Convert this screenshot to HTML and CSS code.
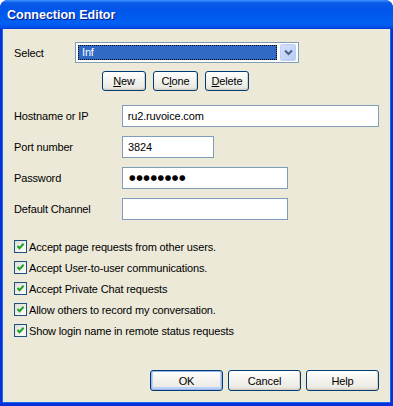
FILE: index.html
```html
<!DOCTYPE html>
<html lang="en">
<head>
  <meta charset="UTF-8">
  <title>Connection Editor</title>
  <link rel="stylesheet" href="styles.css">
</head>
<body>
  <div class="window">
    <div class="titlebar"><span class="title">Connection Editor</span></div>

    <div class="window-body">
      <!-- connection picker -->
      <div class="select-row">
        <span class="label select-label">Select</span>
        <div class="combo">
          <span class="combo-value">Inf</span>
          <span class="combo-button">
            <svg width="9" height="7" viewBox="0 0 9 7"><path d="M1 1.5 L4.5 5 L8 1.5" fill="none" stroke="#4d6185" stroke-width="2"/></svg>
          </span>
        </div>
      </div>

      <div class="tool-row">
        <button class="btn btn-small"><u>N</u>ew</button>
        <button class="btn btn-clone">C<u>l</u>one</button>
        <button class="btn btn-small"><u>D</u>elete</button>
      </div>

      <!-- server fields -->
      <div class="fields">
        <div class="field-row">
          <span class="label">Hostname or IP</span>
          <div class="field field-wide">ru2.ruvoice.com</div>
        </div>
        <div class="field-row">
          <span class="label">Port number</span>
          <div class="field field-short">3824</div>
        </div>
        <div class="field-row">
          <span class="label">Password</span>
          <div class="field field-mid password">●●●●●●●●</div>
        </div>
        <div class="field-row">
          <span class="label">Default Channel</span>
          <div class="field field-mid"></div>
        </div>
      </div>

      <!-- options -->
      <div class="checks">
        <label class="check"><span class="box"><svg width="11" height="11" viewBox="0 0 11 11"><path d="M2.5 5 L4.5 7.2 L8.6 2.8" fill="none" stroke="#21a121" stroke-width="2"/></svg></span>Accept page requests from other users.</label>
        <label class="check"><span class="box"><svg width="11" height="11" viewBox="0 0 11 11"><path d="M2.5 5 L4.5 7.2 L8.6 2.8" fill="none" stroke="#21a121" stroke-width="2"/></svg></span>Accept User-to-user communications.</label>
        <label class="check"><span class="box"><svg width="11" height="11" viewBox="0 0 11 11"><path d="M2.5 5 L4.5 7.2 L8.6 2.8" fill="none" stroke="#21a121" stroke-width="2"/></svg></span>Accept Private Chat requests</label>
        <label class="check"><span class="box"><svg width="11" height="11" viewBox="0 0 11 11"><path d="M2.5 5 L4.5 7.2 L8.6 2.8" fill="none" stroke="#21a121" stroke-width="2"/></svg></span>Allow others to record my conversation.</label>
        <label class="check"><span class="box"><svg width="11" height="11" viewBox="0 0 11 11"><path d="M2.5 5 L4.5 7.2 L8.6 2.8" fill="none" stroke="#21a121" stroke-width="2"/></svg></span>Show login name in remote status requests</label>
      </div>

      <div class="actions">
        <button class="btn btn-wide btn-default">OK</button>
        <button class="btn btn-wide">Cancel</button>
        <button class="btn btn-wide">Help</button>
      </div>
    </div>
  </div>
</body>
</html>
```

FILE: styles.css
```css
* {
  box-sizing: border-box;
  margin: 0;
  padding: 0;
}

html,
body {
  background: #fff;
  width: 393px;
  height: 406px;
  overflow: hidden;
}

body {
  font-family: 'Liberation Sans', Arial, sans-serif;
  font-size: 11px;
  letter-spacing: -0.15px;
  color: #000;
}

.window {
  display: flex;
  flex-direction: column;
  width: 393px;
  height: 406px;
  background: #0831d9;
  border-radius: 8px 8px 0 0;
  overflow: hidden;
}

.titlebar {
  height: 29px;
  flex-shrink: 0;
  padding: 8px 0 0 7px;
  background: linear-gradient(180deg, #3d95ff 0, #0a5ae8 10%, #0055ea 35%, #0060f4 80%, #0058ee 90%, #003dd7 100%);
}

.title {
  color: #fff;
  font-weight: bold;
  font-size: 12.5px;
  letter-spacing: 0;
  text-shadow: 1px 1px #0a1883;
}

.window-body {
  flex: 1;
  display: flex;
  flex-direction: column;
  margin: 0 3px 4px 3px;
  padding: 13px 11px 11px 11px;
  background: #ece9d8;
  box-shadow: -1px 0 #166aee, 1px 0 #166aee, 0 1px #166aee;
}

.label {
  line-height: 22px;
}

/* select row */
.select-row {
  display: flex;
  align-items: center;
  height: 21px;
}

.select-label {
  width: 61px;
}

.combo {
  display: flex;
  align-items: center;
  width: 224px;
  height: 21px;
  padding: 2px;
  border: 1px solid #7f9db9;
  background: #fff;
}

.combo-value {
  flex: 1;
  height: 15px;
  margin-right: 3px;
  padding-left: 3px;
  line-height: 13px;
  color: #fff;
  background: #316ac5;
  border: 1px dotted #e6d16b;
  outline: 1px dotted #000;
  outline-offset: -1px;
}

.combo-button {
  display: flex;
  align-items: center;
  justify-content: center;
  width: 16px;
  height: 17px;
  border: 1px solid #bccdf6;
  border-radius: 2px;
  background: linear-gradient(135deg, #d4e1fd, #b6cbf8);
}

/* buttons */
.btn {
  font-family: inherit;
  font-size: 11px;
  letter-spacing: -0.15px;
  color: #000;
  border: 1px solid #003c74;
  border-radius: 3px;
  background: linear-gradient(180deg, #fff 0, #f5f4f0 40%, #eceae3 85%, #d6d0c5 100%);
  box-shadow: inset -1px -1px #d6d0c5;
}

.tool-row {
  display: flex;
  gap: 7px;
  margin: 8px 0 0 88px;
}

.btn-small {
  width: 44px;
  height: 20px;
}

.btn-clone {
  width: 45px;
  height: 20px;
}

/* text fields */
.fields {
  display: flex;
  flex-direction: column;
  gap: 9px;
  margin-top: 14px;
}

.field-row {
  display: flex;
  align-items: center;
}

.field-row .label {
  width: 108px;
}

.field {
  height: 22px;
  padding-left: 5px;
  line-height: 20px;
  border: 1px solid #7f9db9;
  background: #fff;
}

.field-wide {
  width: 258px;
}

.field-short {
  width: 92px;
}

.field-mid {
  width: 166px;
}

.password {
  font-family: 'DejaVu Sans', sans-serif;
  font-size: 7.5px;
  letter-spacing: 0.6px;
  padding-left: 6px;
}

/* check boxes */
.checks {
  display: flex;
  flex-direction: column;
  margin-top: 16px;
}

.check {
  display: flex;
  align-items: center;
  height: 21px;
}

.box {
  display: flex;
  align-items: center;
  justify-content: center;
  width: 13px;
  height: 13px;
  margin-right: 2px;
  border: 1px solid #1c5180;
  background: linear-gradient(135deg, #dcdcd7, #fff);
}

/* dialog buttons */
.actions {
  display: flex;
  justify-content: flex-end;
  gap: 5px;
  margin-top: auto;
}

.btn-wide {
  width: 73px;
  height: 21px;
}

.btn-default {
  box-shadow: inset 0 0 0 1px #9ab5ee, inset 0 -1px 0 2px #bdd0f6;
}
```
